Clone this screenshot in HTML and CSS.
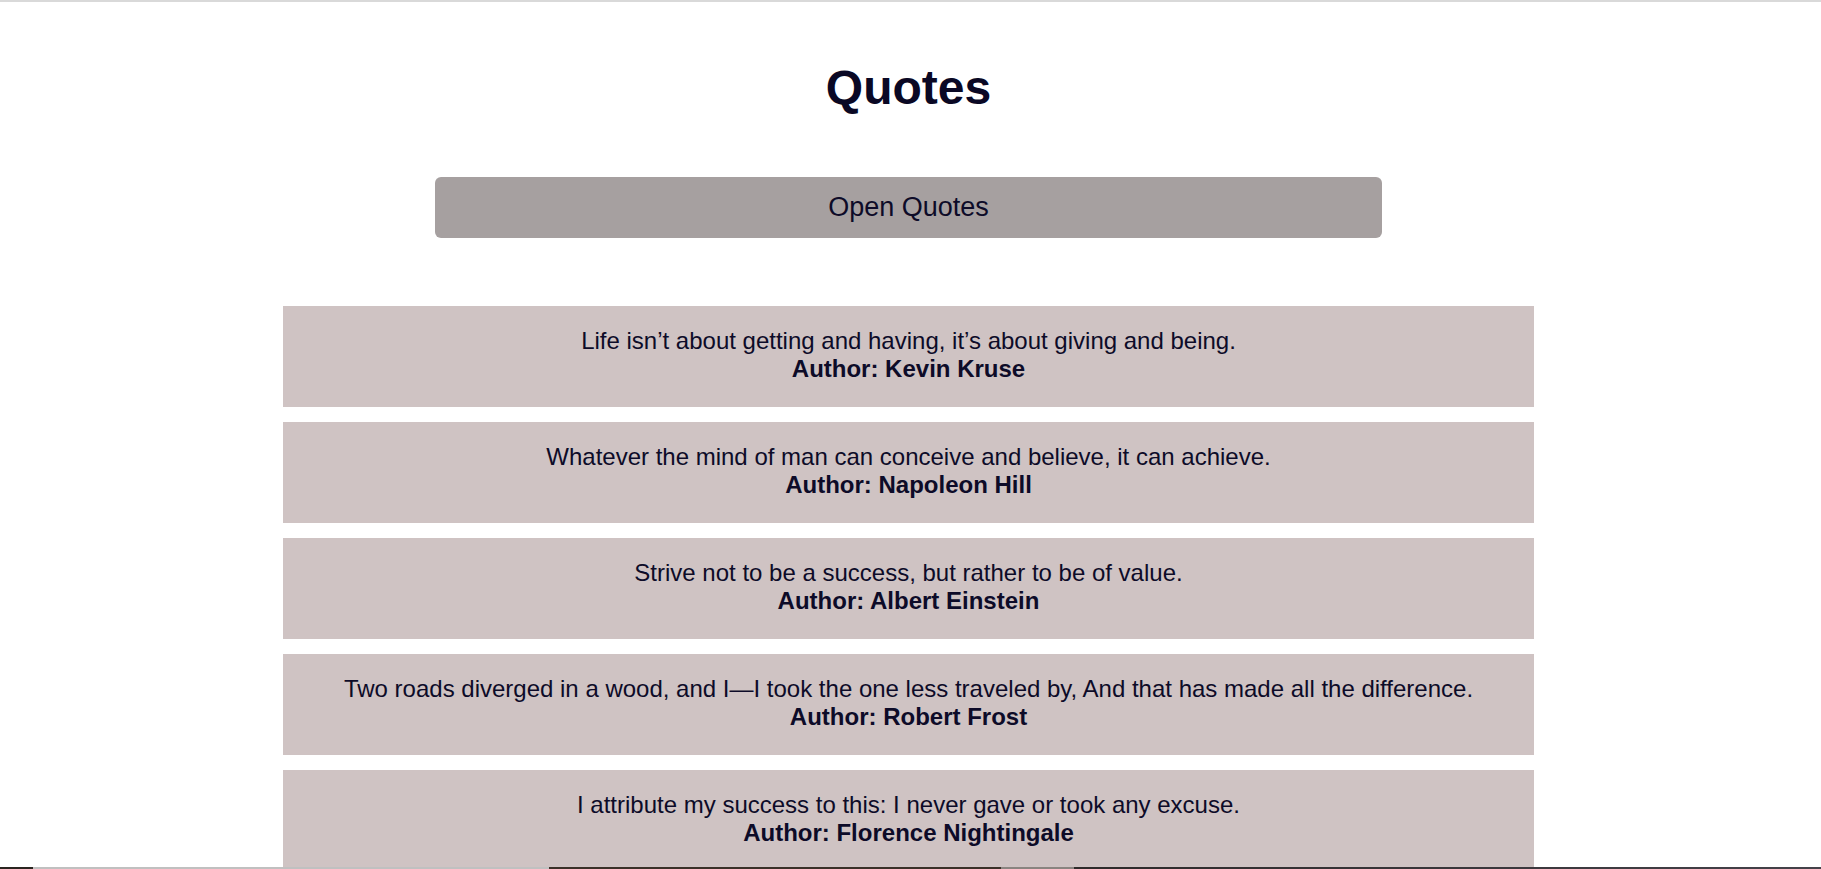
FILE: index.html
```html
<!DOCTYPE html>
<html lang="en">
<head>
<meta charset="utf-8">
<title>Quotes</title>
<link rel="stylesheet" href="styles.css">
</head>
<body>
<div class="page">
  <h1 class="title">Quotes</h1>
  <button class="open-btn" type="button">Open Quotes</button>
  <ul class="quotes">
    <li class="quote">
      <p class="quote-text">Life isn’t about getting and having, it’s about giving and being.</p>
      <p class="quote-author">Author: Kevin Kruse</p>
    </li>
    <li class="quote">
      <p class="quote-text">Whatever the mind of man can conceive and believe, it can achieve.</p>
      <p class="quote-author">Author: Napoleon Hill</p>
    </li>
    <li class="quote">
      <p class="quote-text">Strive not to be a success, but rather to be of value.</p>
      <p class="quote-author">Author: Albert Einstein</p>
    </li>
    <li class="quote">
      <p class="quote-text">Two roads diverged in a wood, and I—I took the one less traveled by, And that has made all the difference.</p>
      <p class="quote-author">Author: Robert Frost</p>
    </li>
    <li class="quote">
      <p class="quote-text">I attribute my success to this: I never gave or took any excuse.</p>
      <p class="quote-author">Author: Florence Nightingale</p>
    </li>
  </ul>
</div>
<div class="bottom-strip"></div>
</body>
</html>
```

FILE: styles.css
```css
html, body {
  margin: 0;
  padding: 0;
}
body {
  background: #ffffff;
  border-top: 2px solid #d9d9d9;
  font-family: "Liberation Sans", Arial, sans-serif;
  color: #0d0b28;
}
.page {
  display: flex;
  flex-direction: column;
  align-items: center;
  margin-right: 4px;
}
.title {
  margin: 60px 0 0;
  font-size: 48px;
  font-weight: 700;
  line-height: 52px;
  color: #0a0824;
}
.open-btn {
  margin-top: 63px;
  width: 947px;
  height: 61px;
  border: none;
  border-radius: 6px;
  background: #a6a0a0;
  font-family: "Liberation Sans", Arial, sans-serif;
  font-size: 27px;
  color: #0d0b28;
  padding: 0;
}
.quotes {
  list-style: none;
  margin: 68px 0 0;
  padding: 0;
  width: 1251px;
  display: flex;
  flex-direction: column;
  gap: 15px;
}
.quote {
  background: #cfc3c3;
  height: 101px;
  box-sizing: border-box;
  padding-top: 21px;
  text-align: center;
}
.quote p {
  margin: 0;
  font-size: 24px;
  line-height: 28px;
}
.quote-author {
  font-weight: 700;
}
.bottom-strip {
  position: fixed;
  left: 0;
  right: 0;
  bottom: 0;
  height: 2px;
  background: linear-gradient(to right,
    #2a2520 0, #2a2520 33px,
    #c0c0c0 33px, #c0c0c0 549px,
    #3a3028 549px, #3a3028 1001px,
    #8a8480 1001px, #8a8480 1074px,
    #2e2a2a 1074px, #45424a 1821px);
}
```
